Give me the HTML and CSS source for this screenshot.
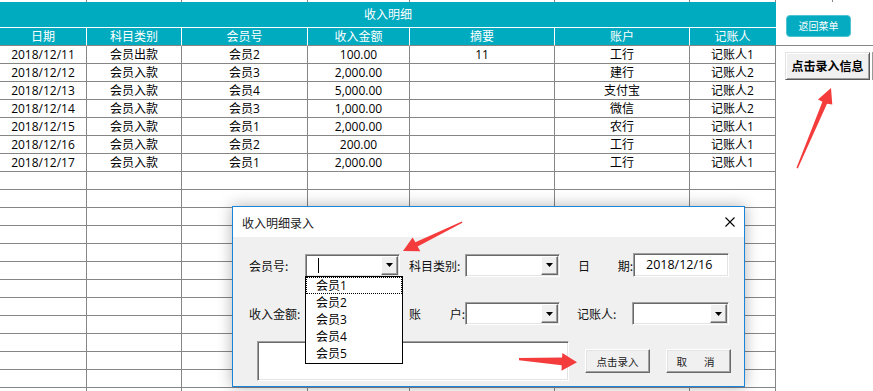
FILE: index.html
```html
<!DOCTYPE html>
<html lang="zh-CN">
<head>
<meta charset="utf-8">
<title>收入明细</title>
<link rel="stylesheet" href="styles.css">
</head>
<body>
<div class="sheet">
  <div class="strip">
    <span></span><span></span><span></span><span></span><span></span><span></span><span></span><span></span>
  </div>
  <div class="main">
    <div class="table">
      <div class="title">收入明细</div>
      <div class="row head"><div>日期</div><div>科目类别</div><div>会员号</div><div>收入金额</div><div>摘要</div><div>账户</div><div>记账人</div></div>
      <div class="row"><div>2018/12/11</div><div>会员出款</div><div>会员2</div><div>100.00</div><div>11</div><div>工行</div><div>记账人1</div></div>
      <div class="row"><div>2018/12/12</div><div>会员入款</div><div>会员3</div><div>2,000.00</div><div></div><div>建行</div><div>记账人2</div></div>
      <div class="row"><div>2018/12/13</div><div>会员入款</div><div>会员4</div><div>5,000.00</div><div></div><div>支付宝</div><div>记账人2</div></div>
      <div class="row"><div>2018/12/14</div><div>会员入款</div><div>会员3</div><div>1,000.00</div><div></div><div>微信</div><div>记账人2</div></div>
      <div class="row"><div>2018/12/15</div><div>会员入款</div><div>会员1</div><div>2,000.00</div><div></div><div>农行</div><div>记账人1</div></div>
      <div class="row"><div>2018/12/16</div><div>会员入款</div><div>会员2</div><div>200.00</div><div></div><div>工行</div><div>记账人1</div></div>
      <div class="row"><div>2018/12/17</div><div>会员入款</div><div>会员1</div><div>2,000.00</div><div></div><div>工行</div><div>记账人1</div></div>
      <div class="row"><div></div><div></div><div></div><div></div><div></div><div></div><div></div></div>
      <div class="row"><div></div><div></div><div></div><div></div><div></div><div></div><div></div></div>
      <div class="row"><div></div><div></div><div></div><div></div><div></div><div></div><div></div></div>
      <div class="row"><div></div><div></div><div></div><div></div><div></div><div></div><div></div></div>
      <div class="row"><div></div><div></div><div></div><div></div><div></div><div></div><div></div></div>
      <div class="row"><div></div><div></div><div></div><div></div><div></div><div></div><div></div></div>
      <div class="row"><div></div><div></div><div></div><div></div><div></div><div></div><div></div></div>
      <div class="row"><div></div><div></div><div></div><div></div><div></div><div></div><div></div></div>
      <div class="row"><div></div><div></div><div></div><div></div><div></div><div></div><div></div></div>
      <div class="row"><div></div><div></div><div></div><div></div><div></div><div></div><div></div></div>
      <div class="row"><div></div><div></div><div></div><div></div><div></div><div></div><div></div></div>
      <div class="row"><div></div><div></div><div></div><div></div><div></div><div></div><div></div></div>
      <div class="row"><div></div><div></div><div></div><div></div><div></div><div></div><div></div></div>
    </div>
    <div class="side">
      <div class="side-top"><button class="menu-btn">返回菜单</button></div>
      <div class="side-body"><button class="entry-btn">点击录入信息</button></div>
    </div>
  </div>
</div>

<div class="dialog">
  <div class="dlg-title">
    <span>收入明细录入</span>
    <svg class="close" width="10" height="10" viewBox="0 0 10 10"><path d="M0.5 0.5 L9.5 9.5 M9.5 0.5 L0.5 9.5" stroke="#000" stroke-width="1.1" fill="none"/></svg>
  </div>
  <div class="dlg-body">
    <div class="form-row">
      <span class="lbl">会员号:</span>
      <div class="combo"><div class="field"><span class="caret"></span></div><div class="drop"><svg width="7" height="4" viewBox="0 0 7 4"><path d="M0 0 H7 L3.5 4 Z" fill="#000"/></svg></div></div>
      <span class="lbl pad-c">科目类别:</span>
      <div class="combo"><div class="field"></div><div class="drop"><svg width="7" height="4" viewBox="0 0 7 4"><path d="M0 0 H7 L3.5 4 Z" fill="#000"/></svg></div></div>
      <span class="lbl pad-e spread"><span>日</span><span>期:</span></span>
      <div class="textbox">2018/12/16</div>
    </div>
    <div class="form-row row2">
      <span class="lbl">收入金额:</span>
      <div class="combo"><div class="field"></div><div class="drop"><svg width="7" height="4" viewBox="0 0 7 4"><path d="M0 0 H7 L3.5 4 Z" fill="#000"/></svg></div></div>
      <span class="lbl pad-c spread"><span>账</span><span>户:</span></span>
      <div class="combo"><div class="field"></div><div class="drop"><svg width="7" height="4" viewBox="0 0 7 4"><path d="M0 0 H7 L3.5 4 Z" fill="#000"/></svg></div></div>
      <span class="lbl pad-e2">记账人:</span>
      <div class="combo wide"><div class="field"></div><div class="drop"><svg width="7" height="4" viewBox="0 0 7 4"><path d="M0 0 H7 L3.5 4 Z" fill="#000"/></svg></div></div>
    </div>
    <div class="form-row3">
      <div class="memo"></div>
      <button class="btn3d">点击录入</button>
      <button class="btn3d cancel"><span>取</span><span>消</span></button>
    </div>
  </div>
  <ul class="listbox">
    <li class="focus">会员1</li>
    <li>会员2</li>
    <li>会员3</li>
    <li>会员4</li>
    <li>会员5</li>
  </ul>
</div>

<svg class="arrows" width="873" height="391" viewBox="0 0 873 391">
  <polygon fill="#f53c3c" points="796.5,167.8 822.4,101.8 818,99.5 831,88 832.3,104.5 827,103.8 797.8,168.4"/>
  <polygon fill="#f53c3c" points="461.8,221.4 415.4,242.2 412.6,237.6 403,251 420.3,251.3 417.6,246.6 462.4,222.8"/>
  <polygon fill="#f53c3c" points="519,358 562.1,357.6 562.3,353 577,362.3 561.5,370.8 561.7,365.2 519,360.2"/>
</svg>
</body>
</html>
```
FILE: styles.css
```css
* { box-sizing: border-box; }
html, body { margin: 0; padding: 0; }
body {
  width: 873px;
  height: 391px;
  overflow: hidden;
  position: relative;
  background: #fff;
  color: #000;
  font-family: "Open Sans", "Noto Sans CJK SC", sans-serif;
  font-size: 12px;
}

/* spreadsheet */
.strip {
  display: grid;
  grid-template-columns: 87px 95px 126px 102px 145px 135px 86px 57px;
  height: 2px;
}
.strip span { border-right: 1px solid #868686; }

.main { display: flex; }
.table { width: 776px; flex: none; }
.title {
  height: 26px;
  background: #00abc0;
  border-bottom: 1px solid #fff;
  color: #fff;
  text-align: center;
  line-height: 25px;
}
.row {
  display: grid;
  grid-template-columns: 87px 95px 126px 102px 145px 135px 86px;
  height: 18px;
}
.row > div {
  border-right: 1px solid #868686;
  border-bottom: 1px solid #868686;
  text-align: center;
  line-height: 17px;
  white-space: nowrap;
  overflow: hidden;
}
.row.head > div {
  background: #00abc0;
  color: #fff;
  border-right-color: #fff;
}
.row.head > div:last-child { border-right-color: #00abc0; }

.side { width: 97px; flex: none; }
.side-top {
  height: 44px;
  border-bottom: 1px solid #868686;
  padding: 13px 0 0 10px;
}
.menu-btn {
  display: block;
  width: 65px;
  height: 22px;
  padding: 0;
  background: #05abc0;
  border: 1px solid #4fc3d2;
  border-radius: 4px;
  color: #fff;
  font-family: "Noto Sans CJK SC", sans-serif;
  font-size: 10px;
  line-height: 20px;
  text-align: center;
}
.side-body { padding: 6px 0 0 9px; }
.entry-btn {
  display: block;
  width: 85px;
  height: 28px;
  padding: 0;
  background: #f0f0f0;
  border: 1px solid;
  border-color: #e3e3e3 #5a5a5a #5a5a5a #e3e3e3;
  box-shadow: inset 1px 1px 0 #fff, inset -1px -1px 0 #a0a0a0, 2px 0 0 #fff, 3px 0 0 #9a9a9a;
  font-family: "Noto Sans CJK SC", sans-serif;
  font-size: 12px;
  font-weight: bold;
  color: #000;
  line-height: 24px;
  text-align: center;
}

/* dialog window */
.dialog {
  position: absolute;
  left: 232px;
  top: 206px;
  width: 513px;
  height: 181px;
  border: 1px solid #1a84d8;
  background: #f0f0f0;
  box-shadow: 0 0 14px rgba(0, 0, 0, 0.3);
  font-family: "Noto Sans CJK SC", sans-serif;
  font-size: 12px;
}
.dlg-title {
  height: 30px;
  background: #fff;
  display: flex;
  align-items: center;
  justify-content: space-between;
  padding: 0 9px 0 9px;
  color: #222;
}
.close { display: block; }
.dlg-body { padding: 16px 0 0 16px; }

.form-row {
  display: grid;
  grid-template-columns: 56px 95px 65px 95px 73px 96px;
  height: 23px;
  align-items: center;
}
.row2 { margin-top: 26px; }
.lbl { white-space: nowrap; color: #111; line-height: 23px; }
.pad-c { padding-left: 9px; }
.pad-e { padding-left: 18px; }
.pad-e2 { padding-left: 17px; }
.spread { display: flex; justify-content: space-between; }

.combo, .textbox, .memo {
  background: #fff;
  border: 1px solid;
  border-color: #a0a0a0 #fff #fff #a0a0a0;
  box-shadow: inset 1px 1px 0 #696969, inset -1px -1px 0 #e3e3e3;
}
.combo {
  height: 23px;
  padding: 1px;
  display: flex;
}
.combo.wide { margin-left: -1px; width: 97px; }
.field { flex: 1; display: flex; align-items: center; }
.caret {
  display: block;
  width: 1px;
  height: 15px;
  margin-left: 11px;
  background: #000;
}
.drop {
  width: 17px;
  height: 19px;
  background: #f0f0f0;
  border: 1px solid;
  border-color: #fff #696969 #696969 #fff;
  box-shadow: inset -1px -1px 0 #a0a0a0;
  display: flex;
  align-items: center;
  justify-content: center;
}
.drop svg { display: block; }
.textbox {
  height: 24px;
  padding-left: 12px;
  line-height: 22px;
  font-family: "Open Sans", "Noto Sans CJK SC", sans-serif;
  font-size: 12.5px;
}

.form-row3 {
  display: flex;
  align-items: flex-start;
  margin-top: 16px;
}
.memo {
  width: 312px;
  height: 40px;
  margin-left: 8px;
}
.btn3d {
  width: 65px;
  height: 24px;
  margin-top: 8px;
  margin-left: 16px;
  padding: 0;
  background: #f0f0f0;
  border: 1px solid;
  border-color: #fff #696969 #696969 #fff;
  box-shadow: inset -1px -1px 0 #a0a0a0, inset 1px 1px 0 #e3e3e3;
  font-family: "Noto Sans CJK SC", sans-serif;
  font-size: 10.5px;
  color: #222;
  text-align: center;
  line-height: 21px;
}
.btn3d.cancel {
  display: flex;
  justify-content: center;
  align-items: center;
  gap: 17px;
  padding-right: 6px;
}

.listbox {
  position: absolute;
  left: 72px;
  top: 69px;
  width: 98px;
  height: 88px;
  margin: 0;
  padding: 0;
  list-style: none;
  background: #fff;
  border: 1px solid #000;
  z-index: 2;
}
.listbox li {
  height: 17px;
  line-height: 17px;
  padding-left: 10px;
  font-family: "Open Sans", "Noto Sans CJK SC", sans-serif;
  font-size: 12px;
}
.listbox li.focus { outline: 1px dotted #000; outline-offset: -1px; }

.arrows {
  position: absolute;
  left: 0;
  top: 0;
  pointer-events: none;
  z-index: 5;
}
```
